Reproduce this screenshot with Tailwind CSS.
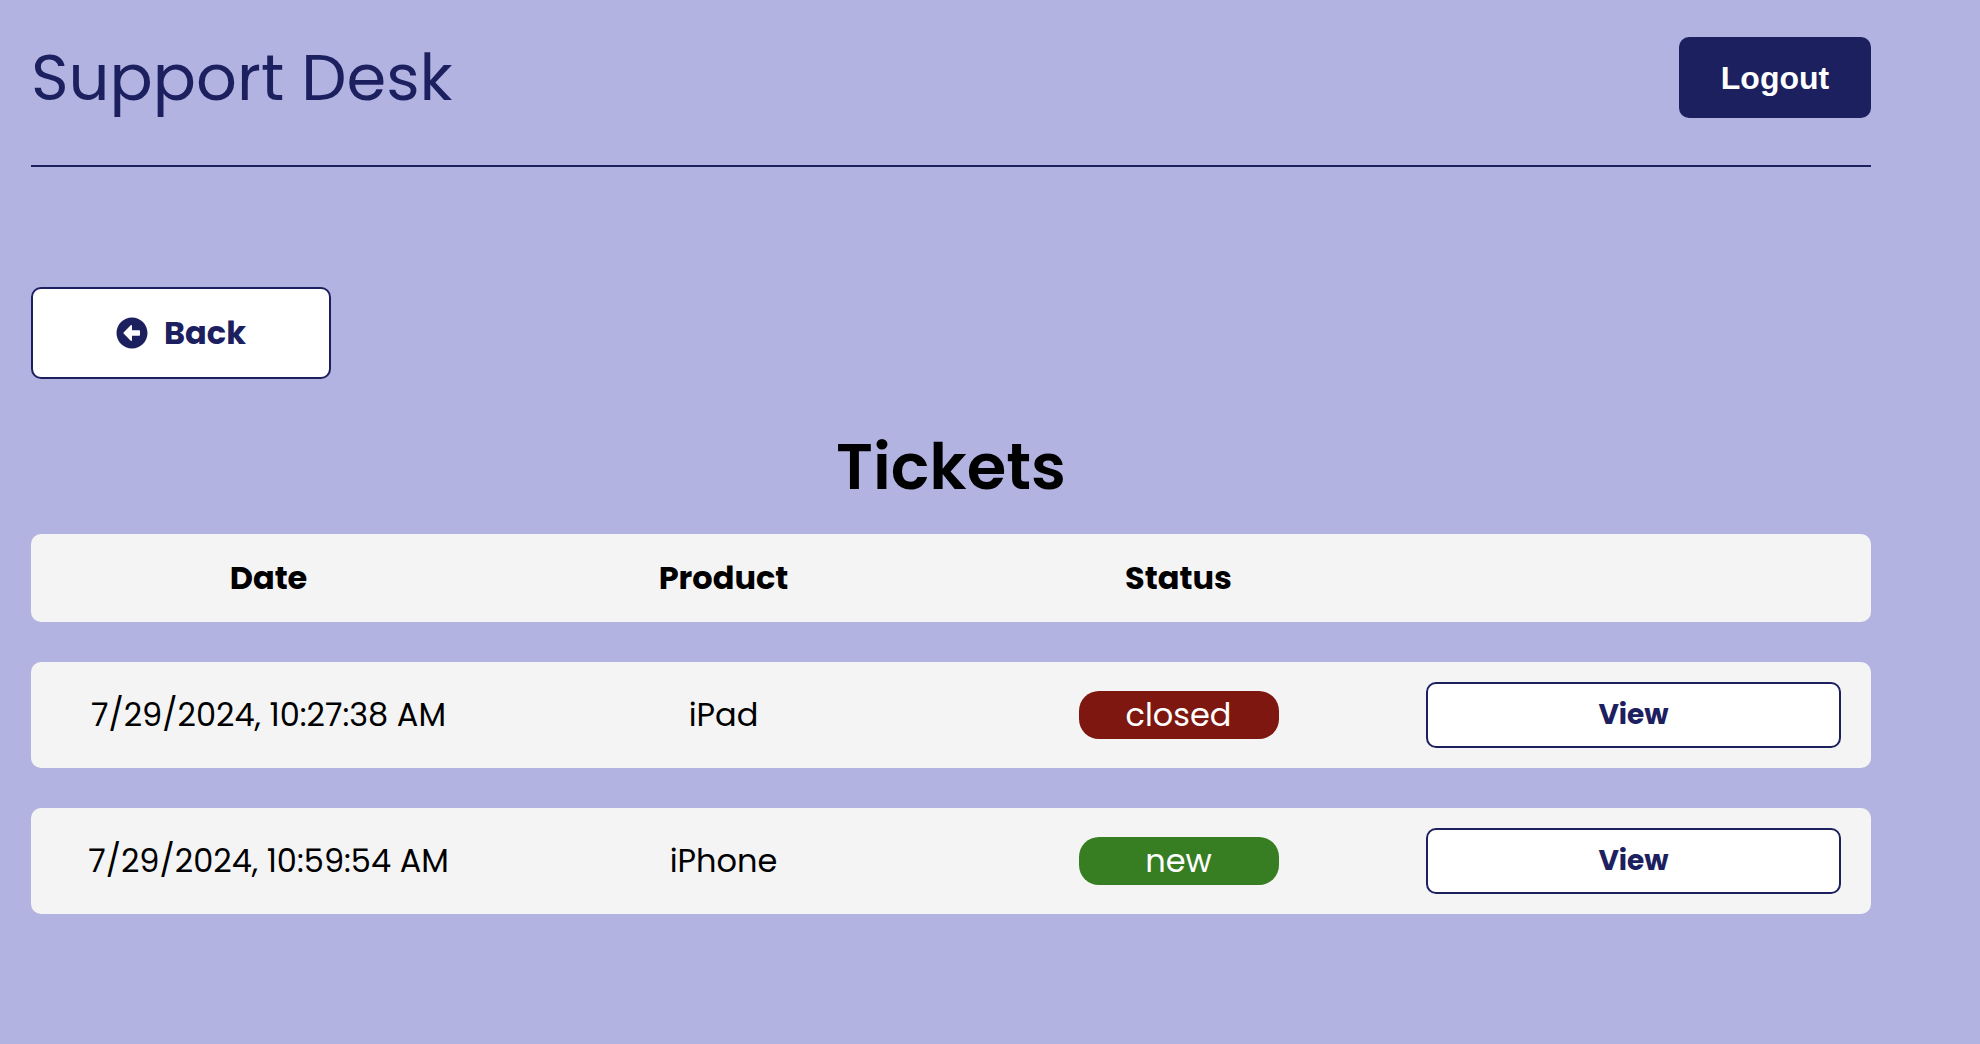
<!DOCTYPE html>
<html lang="en">
<head>
<meta charset="utf-8">
<meta name="viewport" content="width=device-width, initial-scale=1">
<title>Support Desk</title>
<script src="https://cdn.jsdelivr.net/npm/@tailwindcss/browser@4"></script>
</head>
<body class="min-h-screen bg-[#b3b3e2] pl-[31px] pr-[109px] font-['Poppins','Inter',sans-serif] text-[32px] leading-[48px] text-black">
  <header class="flex items-center justify-between border-b-2 border-[#1c205f] pt-[37px] pb-[47px]">
    <a href="#" class="text-[64px] leading-[80px] text-[#1c205f]">Support Desk</a>
    <button type="button" class="h-[81px] w-48 rounded-[10px] bg-[#1c205f] font-['Liberation_Sans',sans-serif] font-bold text-white">Logout</button>
  </header>

  <main class="pt-[120px]">
    <a href="#" class="flex h-[92px] w-[300px] items-center justify-center gap-4 rounded-[10px] border-2 border-[#1c205f] bg-white font-bold text-[#1c205f]">
      <svg class="size-8" viewBox="0 0 512 512" fill="currentColor" aria-hidden="true"><path d="M256 504C119 504 8 393 8 256S119 8 256 8s248 111 248 248-111 248-248 248zm116-292H256v-70.9c0-10.7-13-16.1-20.5-8.5L121.2 247.5c-4.7 4.7-4.7 12.2 0 16.9l114.3 114.9c7.6 7.6 20.5 2.2 20.5-8.5V300h116c6.6 0 12-5.4 12-12v-64c0-6.6-5.4-12-12-12z"/></svg>
      Back
    </a>

    <h1 class="pt-12 pb-[27px] text-center text-[64px] leading-[80px] font-semibold">Tickets</h1>

    <table class="block text-center">
      <thead class="block">
        <tr class="grid grid-cols-4 gap-10 rounded-[10px] bg-[#f4f4f4] px-[30px] py-5">
          <th scope="col" class="font-bold">Date</th>
          <th scope="col" class="font-bold">Product</th>
          <th scope="col" class="font-bold">Status</th>
          <td></td>
        </tr>
      </thead>
      <tbody class="flex flex-col gap-10 pt-10">
        <tr class="grid grid-cols-4 items-center gap-10 rounded-[10px] bg-[#f4f4f4] px-[30px] py-5">
          <td>7/29/2024, 10:27:38 AM</td>
          <td>iPad</td>
          <td><span class="mx-auto block w-[200px] rounded-[20px] bg-[#7d170f] text-white">closed</span></td>
          <td><a href="#" class="flex h-[66px] items-center justify-center rounded-[10px] border-2 border-[#1c205f] bg-white text-[28px] font-bold text-[#1c205f]">View</a></td>
        </tr>
        <tr class="grid grid-cols-4 items-center gap-10 rounded-[10px] bg-[#f4f4f4] px-[30px] py-5">
          <td>7/29/2024, 10:59:54 AM</td>
          <td>iPhone</td>
          <td><span class="mx-auto block w-[200px] rounded-[20px] bg-[#377d22] text-white">new</span></td>
          <td><a href="#" class="flex h-[66px] items-center justify-center rounded-[10px] border-2 border-[#1c205f] bg-white text-[28px] font-bold text-[#1c205f]">View</a></td>
        </tr>
      </tbody>
    </table>
  </main>
</body>
</html>
